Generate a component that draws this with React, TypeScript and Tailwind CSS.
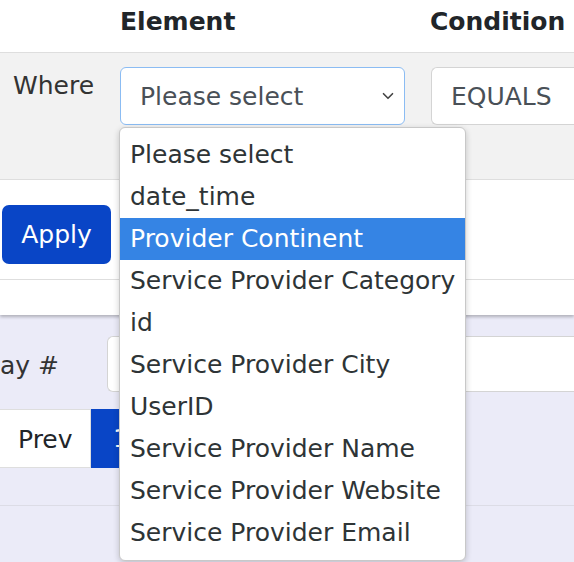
import { ChevronDown } from "lucide-react"

const options = [
  "Please select",
  "date_time",
  "Provider Continent",
  "Service Provider Category",
  "id",
  "Service Provider City",
  "UserID",
  "Service Provider Name",
  "Service Provider Website",
  "Service Provider Email",
]

export default function App() {
  return (
    <div
      className="relative w-[574px] h-[562px] overflow-hidden bg-[#ebebf8] text-[25px] leading-[36px] text-[#333333]"
      style={{ fontFamily: '"DejaVu Sans", sans-serif' }}
    >
      {/* Filter card */}
      <div className="bg-white shadow-[0_2px_3px_rgba(0,0,0,0.25)]">
        {/* Header */}
        <div className="flex h-[53px] items-start border-b border-[#dedede] pt-[4px] font-bold text-[#212529]">
          <div className="w-[108px] shrink-0" />
          <div className="w-[311px] shrink-0 pl-[12px]">Element</div>
          <div className="pl-[11px]">Condition</div>
        </div>

        {/* Where row */}
        <div className="flex h-[127px] items-start border-b border-[#dedede] bg-[#f2f2f2] pt-[14px]">
          <div className="w-[108px] shrink-0 pl-[13px] pt-[1px]">Where</div>
          <div className="w-[311px] shrink-0 pl-[12px]">
            <div className="flex h-[58px] w-[285px] items-center justify-between rounded-[6px] border-[1.5px] border-[#8bbcf3] bg-white pb-[-2px] pl-[19px] pr-[7px] pt-[2px] text-[#495057]">
              <span>Please select</span>
              <ChevronDown size={18} strokeWidth={2.2} className="mb-[2px] text-[#444]" />
            </div>
          </div>
          <div className="flex-1 pl-[12px]">
            <div className="flex h-[58px] items-center rounded-l-[6px] border border-r-0 border-[#d4d4d4] bg-white pl-[19px] pt-[2px] text-[#495057]">
              EQUALS
            </div>
          </div>
        </div>

        {/* Apply row */}
        <div className="flex h-[100px] items-start border-b border-[#dedede] pt-[25px] pl-[2px]">
          <button className="flex h-[59px] w-[109px] items-center justify-center rounded-[7px] bg-[#0945c6] text-white">
            Apply
          </button>
        </div>
        <div className="h-[35px]" />
      </div>

      {/* Table controls */}
      <div className="pt-[21px]">
        <div className="flex items-center">
          <span className="w-[107px] shrink-0 pt-[4px]">ay #</span>
          <div className="h-[56px] flex-1 rounded-l-[6px] border border-r-0 border-[#d4d4d4] bg-white" />
        </div>
        <div className="mt-[17px] flex h-[59px]">
          <div className="flex w-[91px] items-center border border-l-0 border-[#dedede] bg-white pl-[18px] pt-[3px] text-[#212529]">
            Prev
          </div>
          <div className="flex w-[60px] items-center justify-center bg-[#0945c6] text-white">1</div>
        </div>
        <div className="mt-[37px] border-t border-[#dcdce6]" />
      </div>

      {/* Open select menu */}
      <div className="absolute left-[119px] top-[127px] w-[347px] rounded-[6px] border border-[#c8c8c8] bg-white py-[6px] shadow-[0_2px_6px_rgba(0,0,0,0.2)]">
        {options.map((opt) => (
          <div
            key={opt}
            className={
              opt === "Provider Continent"
                ? "flex h-[42px] items-center bg-[#3584e4] pl-[10px] text-white"
                : "flex h-[42px] items-center pl-[10px] text-[#2e3436]"
            }
          >
            {opt}
          </div>
        ))}
      </div>
    </div>
  )
}
